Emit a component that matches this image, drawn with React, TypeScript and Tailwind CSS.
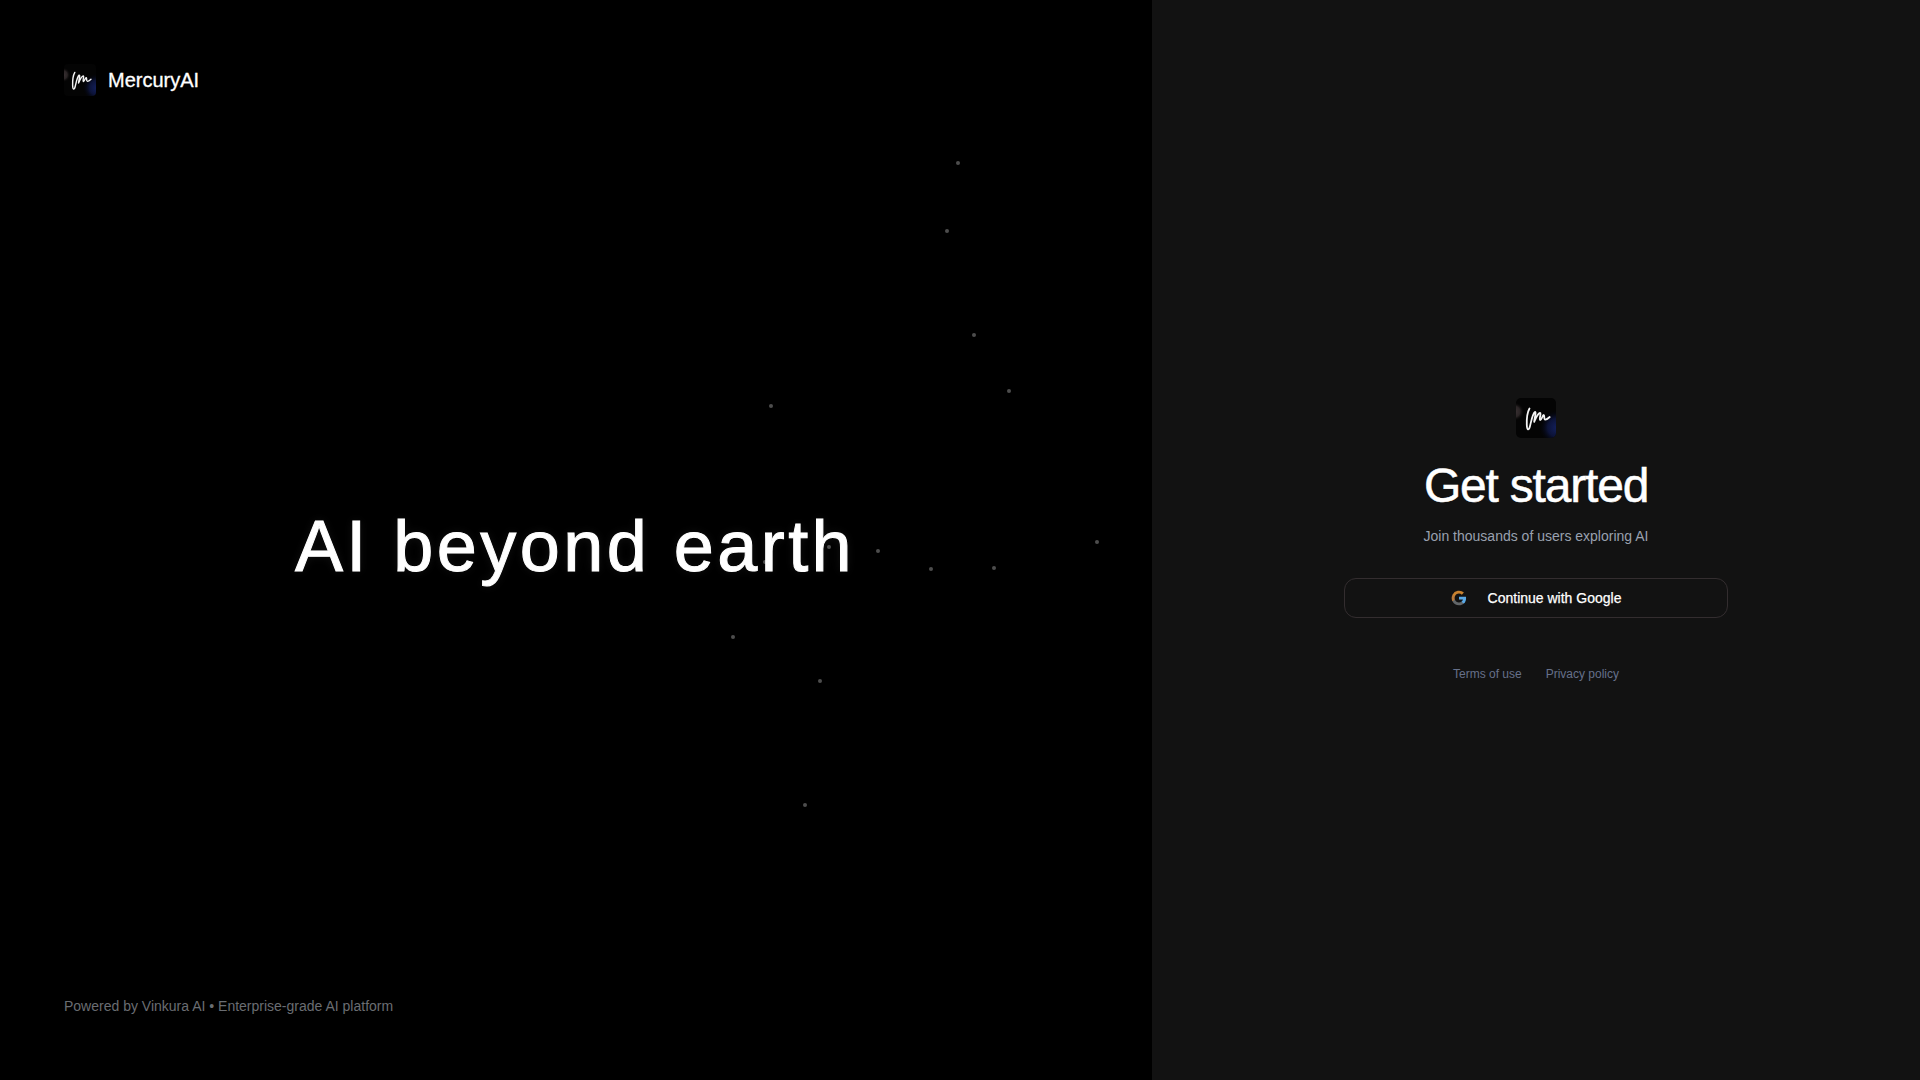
const STARS = [
  { x: 958, y: 163 },
  { x: 947, y: 231 },
  { x: 973.7, y: 335 },
  { x: 1009, y: 391.3 },
  { x: 771.4, y: 406 },
  { x: 765, y: 562 },
  { x: 829, y: 547.3 },
  { x: 877.5, y: 551 },
  { x: 930.6, y: 569 },
  { x: 993.6, y: 568.3 },
  { x: 1096.7, y: 542.2 },
  { x: 733, y: 637.3 },
  { x: 820.4, y: 681.2 },
  { x: 804.5, y: 805.3 },
]

function Logo({ id, className }: { id: string; className: string }) {
  return (
    <svg viewBox="0 0 40 40" className={className} aria-hidden="true">
      <defs>
        <radialGradient id={`${id}-blue`} cx="1.02" cy="0.74" r="0.46">
          <stop offset="0" stopColor="#13205c" />
          <stop offset="0.5" stopColor="#0c1338" />
          <stop offset="1" stopColor="#000000" stopOpacity="0" />
        </radialGradient>
        <radialGradient id={`${id}-grey`} cx="-0.03" cy="0.34" r="0.24">
          <stop offset="0" stopColor="#3a3234" />
          <stop offset="0.55" stopColor="#2a2425" />
          <stop offset="1" stopColor="#000000" stopOpacity="0" />
        </radialGradient>
      </defs>
      <rect width="40" height="40" rx="5" fill="#040404" />
      <rect width="40" height="40" rx="5" fill={`url(#${id}-blue)`} />
      <rect width="40" height="40" rx="5" fill={`url(#${id}-grey)`} />
      <path
        d="M13.5 10.5C11.2 14.5 10.6 21 10.8 27C11 32.5 12.8 32.6 13.9 28.5C15.3 23 16.5 15.8 18.9 14C20.6 13.5 18.4 20.5 18.2 23.8C19.6 20.5 21.6 15.4 24 14.8C25.6 15 22.8 21.2 24.2 22C25.8 22.2 26.3 17 27.8 17C28.8 17.5 27.6 21.6 29.2 21.7C30.8 21.6 32.2 20.4 33.7 19"
        fill="none"
        stroke="#f4f4f4"
        strokeWidth="1.8"
        strokeLinecap="round"
        strokeLinejoin="round"
      />
    </svg>
  )
}

function GoogleIcon() {
  return (
    <svg viewBox="0 0 24 24" className="size-4" fill="none" aria-hidden="true">
      <path d="M22.6 12.2c0-.8-.1-1.5-.2-2.2H12v4.3h5.9a5 5 0 0 1-2.2 3.3v2.8h3.6c2.1-1.9 3.3-4.8 3.3-8.2z" fill="#5aa9e6" />
      <path d="M12 23c3 0 5.5-1 7.3-2.7l-3.6-2.8c-1 .7-2.2 1.1-3.7 1.1-2.9 0-5.3-1.9-6.2-4.5H2.2v2.8C4 20.5 7.7 23 12 23z" fill="#626669" />
      <path d="M5.8 14.1a6.6 6.6 0 0 1 0-4.2V7.1H2.2a11 11 0 0 0 0 9.9l3.6-2.9z" fill="#b97a3c" />
      <path d="M12 5.4c1.6 0 3.1.6 4.2 1.6l3.2-3.1A11 11 0 0 0 2.2 7.1l3.6 2.8C6.7 7.3 9.1 5.4 12 5.4z" fill="#c9822f" />
    </svg>
  )
}

export default function App() {
  return (
    <div className="flex h-screen bg-black font-['Liberation_Sans',Arial,sans-serif] overflow-hidden">

      {/* Hero panel */}
      <section className="relative w-3/5 flex flex-col justify-between p-16 bg-black">
        {/* Starfield */}
        {STARS.map(s => (
          <span
            key={`${s.x}-${s.y}`}
            className="absolute size-1 -ml-0.5 -mt-0.5 rounded-full bg-[#4d4d4d]"
            style={{ left: s.x, top: s.y }}
          />
        ))}

        <div className="flex items-center gap-3">
          <Logo id="brand" className="size-8" />
          <span className="text-xl font-medium text-white [-webkit-text-stroke:0.3px_white]">MercuryAI</span>
        </div>

        <h1 className="relative pr-0.5 text-center text-7xl font-light tracking-[0.048em] text-white
          [-webkit-text-stroke:1px_white] [text-shadow:0_0_10px_rgba(255,255,255,0.08)]">
          AI beyond earth
        </h1>

        <p className="text-sm text-[#6a6d72]">
          Powered by Vinkura AI • Enterprise-grade AI platform
        </p>
      </section>

      {/* Sign-in panel */}
      <section className="w-2/5 flex items-center justify-center bg-[#121212]">
        <div className="w-96 flex flex-col items-center">
          <Logo id="signin" className="size-10" />
          <h2 className="mt-6 text-5xl tracking-tight text-white [-webkit-text-stroke:0.5px_white]">Get started</h2>
          <p className="mt-4 text-sm text-[#99a1af]">Join thousands of users exploring AI</p>

          <button className="mt-8 w-full h-10 flex items-center justify-center gap-[21px] rounded-xl
            border border-[#332d2f] text-sm font-medium text-white [-webkit-text-stroke:0.25px_white]">
            <GoogleIcon />
            Continue with Google
          </button>

          <div className="mt-12 flex gap-6 text-xs text-[#66708a]">
            <a href="#">Terms of use</a>
            <a href="#">Privacy policy</a>
          </div>
        </div>
      </section>
    </div>
  )
}
